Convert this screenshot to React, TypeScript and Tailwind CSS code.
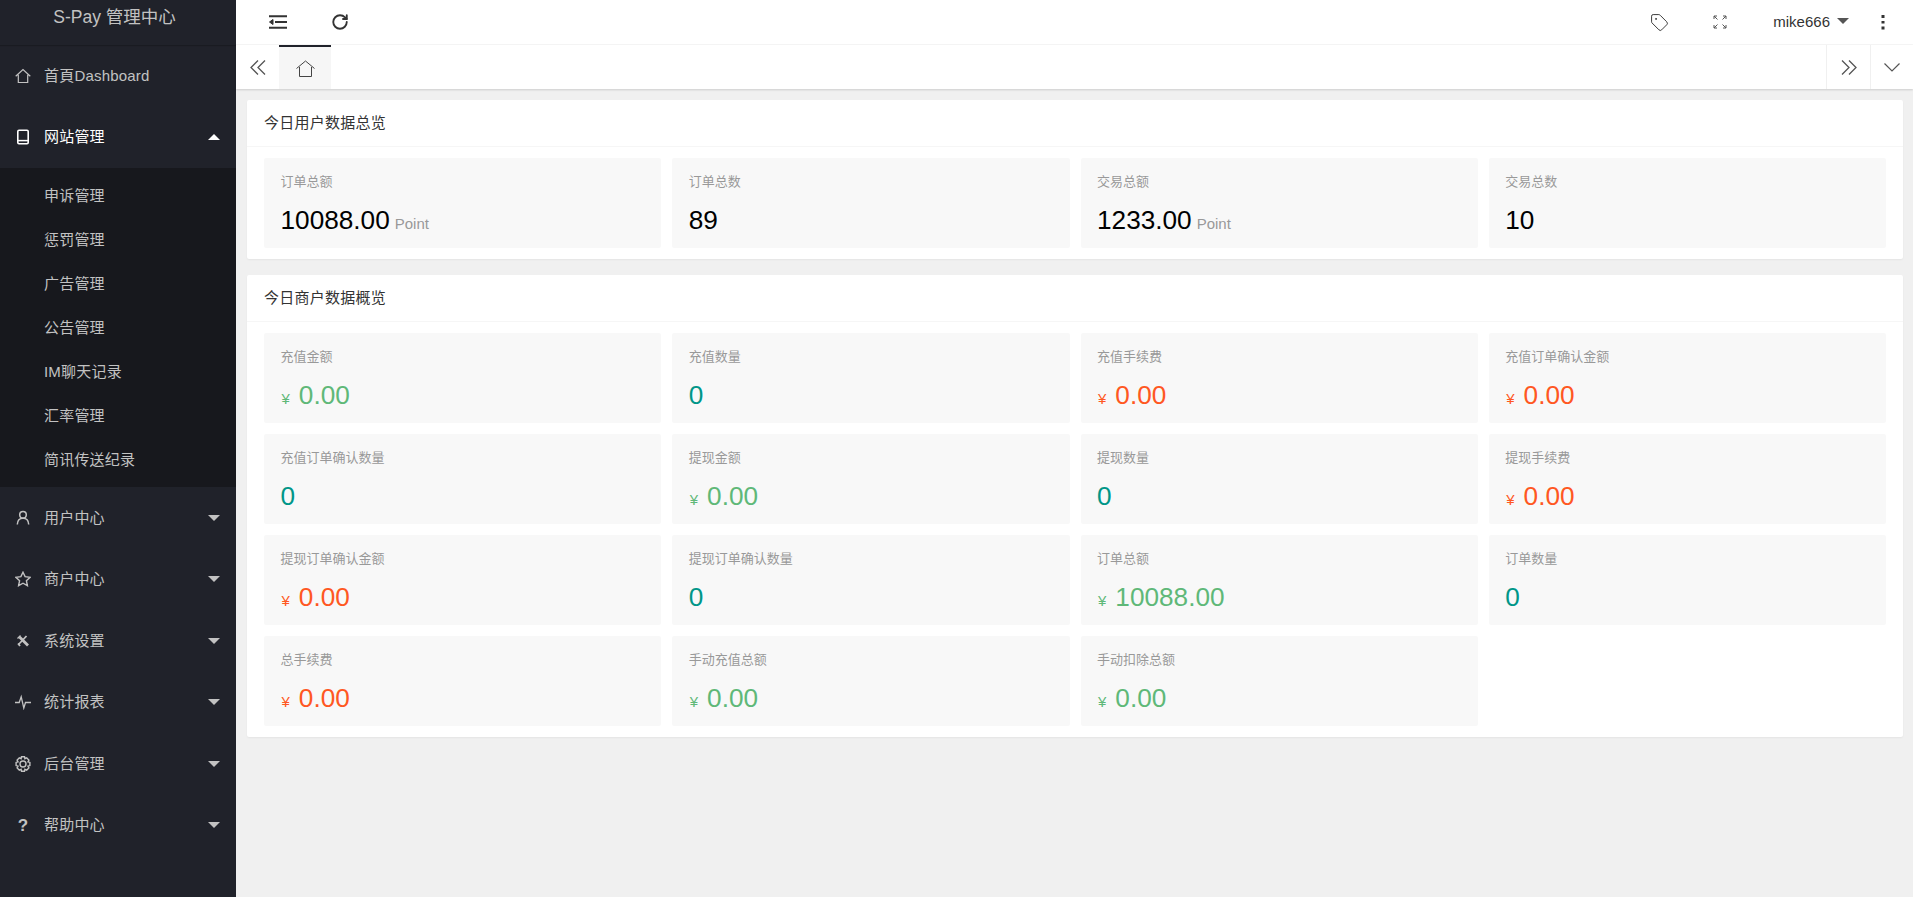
import React from "react";
import { RotateCw, Tag } from "lucide-react";

const FONT = "font-['Liberation_Sans','Noto_Sans_CJK_SC',sans-serif]";

const Svg = ({ children, className = "" }: { children: React.ReactNode; className?: string }) => (
  <svg viewBox="0 0 16 16" width="16" height="16" fill="none" stroke="currentColor" strokeWidth="1.2" className={className}>
    {children}
  </svg>
);

const HomeIco = () => (
  <Svg><path d="M.7 8.200 8 1.500l7.300 6.700M3.300 6.800v7.700h9.400V6.800" /></Svg>
);
const Phone = () => (
  <Svg><rect x="2.800" y="1.200" width="10.400" height="13.600" rx="1.200" strokeWidth="1.600" /><path d="M3 11.600h10" strokeWidth="1.500" /></Svg>
);
const User = () => (
  <Svg><circle cx="8" cy="4.800" r="3.300" strokeWidth="1.500" /><path d="M2.300 14.500c.2-4 2.200-6.200 5.700-6.200s5.500 2.200 5.700 6.200" strokeWidth="1.500" /></Svg>
);
const Star = () => (
  <Svg><path d="M8 1.200 10.100 5.600l5 .7-3.700 3.400 1 4.900L8 12.200l-4.400 2.400 1-4.900L.9 6.300l5-.7z" strokeWidth="1.400" /></Svg>
);
const Tools = () => (
  <svg viewBox="0 0 16 16" width="16" height="16" fill="none" stroke="currentColor">
    <path d="M4.500 4 13 12.500" strokeWidth="2.800" />
    <path d="M11.500 3 3.500 11.500" strokeWidth="1.800" />
    <path d="M2.500 5.500 5.500 2.500" strokeWidth="1.300" />
    <path d="M3 10.500 5 13" strokeWidth="1.800" />
  </svg>
);
const Pulse = () => (
  <Svg><path d="M0 8.500h4.200L6.200 2.800 8.800 14l1.700-5.500H16" strokeWidth="1.300" /></Svg>
);
const Gear = () => (
  <Svg>
    <circle cx="8" cy="8" r="3" strokeWidth="1.400" />
    <path d="M6.500.8h3l.4 1.900 1.800-.8 2.200 2.200-.9 1.700 1.900.6v3.200l-1.900.6.900 1.700-2.200 2.200-1.800-.8-.4 1.900h-3l-.4-1.900-1.800.8-2.200-2.200.9-1.700-1.900-.6V6.400l1.900-.6-.9-1.700 2.200-2.200 1.800.8z" strokeWidth="1.400" />
  </Svg>
);
const Question = () => (
  <span className="flex w-4 h-4 items-center justify-center text-[17px] font-bold leading-none">?</span>
);

const Caret = ({ up = false }: { up?: boolean }) => (
  <span
    className={
      (up ? "border-b-[6px] border-b-white " : "border-t-[6px] border-t-[#c2c2c2] ") +
      "w-0 h-0 border-x-[6px] border-x-transparent"
    }
  />
);

const MenuRow = ({ icon, label, open, active }: { icon: React.ReactNode; label: string; open?: boolean; active?: boolean }) => (
  <div className={"flex h-[61.5px] items-center pl-[15px] pr-[16px] " + (active ? "text-white" : "text-[#c2c2c2]")}>
    <span className="flex w-4 justify-center mr-[13px]">{icon}</span>
    <span className="flex-1 text-[15px] tracking-[0.2px]">{label}</span>
    {open !== undefined && <Caret up={open} />}
  </div>
);

const SubItems = ["申诉管理", "惩罚管理", "广告管理", "公告管理", "IM聊天记录", "汇率管理", "简讯传送纪录"];

const Sidebar = () => (
  <aside className="w-[236px] shrink-0 bg-[#20222a] flex flex-col min-h-[897px]">
    <div className="h-[45px] flex items-start justify-center pt-[5px] text-[17.5px] text-[#c2c2c2] pr-[7px] leading-[24px] shadow-[0_1px_1px_rgba(0,0,0,0.2)]">
      S-Pay 管理中心
    </div>
    <MenuRow icon={<HomeIco />} label="首頁Dashboard" />
    <MenuRow icon={<Phone />} label="网站管理" open active />
    <div className="bg-[#17181d] py-[5.5px] flex flex-col">
      {SubItems.map((s) => (
        <div key={s} className="h-[44px] flex items-center pl-[44px] pt-[1px] text-[15px] tracking-[0.2px] text-[#c2c2c2]">{s}</div>
      ))}
    </div>
    <MenuRow icon={<User />} label="用户中心" open={false} />
    <MenuRow icon={<Star />} label="商户中心" open={false} />
    <MenuRow icon={<Tools />} label="系统设置" open={false} />
    <MenuRow icon={<Pulse />} label="统计报表" open={false} />
    <MenuRow icon={<Gear />} label="后台管理" open={false} />
    <MenuRow icon={<Question />} label="帮助中心" open={false} />
  </aside>
);

const TopBar = () => (
  <header className="h-[45px] bg-white border-b border-[#f6f6f6] flex items-center text-[#333]">
    <div className="w-[51px] flex justify-end">
      <svg viewBox="0 0 18 14" width="18" height="14" fill="none" stroke="#333" strokeWidth="2">
        <path d="M0 1.200h18M6 7h12M0 12.800h18" />
        <path d="M4 4.500 .5 7 4 9.500z" fill="#333" strokeWidth="1" />
      </svg>
    </div>
    <RotateCw size={18} strokeWidth={2.5} className="ml-[44px] text-[#333]" />
    <div className="flex-1" />
    <Tag size={19} strokeWidth={1.2} className="text-[#333] mr-[44px]" />
    <svg viewBox="0 0 14 14" width="14" height="14" fill="none" stroke="#555" strokeWidth="1" className="mr-[46px]">
      <path d="M1 4V1h3M1 1l3.500 3.500M13 4V1h-3M13 1 9.500 4.500M1 10v3h3M1 13l3.500-3.500M13 10v3h-3M13 13 9.500 9.500" />
    </svg>
    <span className="text-[15px] text-[#333] mr-[7px]">mike666</span>
    <span className="w-0 h-0 border-x-[6px] border-x-transparent border-t-[6px] border-t-[#555] mb-[3px] mr-[32px]" />
    <svg viewBox="0 0 4 16" width="4" height="16" fill="#333" className="mr-[28px]">
      <rect x="0.500" y="1" width="3" height="3" />
      <rect x="0.500" y="7" width="3" height="2.500" />
      <rect x="0.500" y="12.500" width="3" height="3" />
    </svg>
  </header>
);

const Chevrons = ({ right = false }: { right?: boolean }) => (
  <svg viewBox="0 0 16 15" width="16" height="15" fill="none" stroke="#555" strokeWidth="1.300" className={right ? "rotate-180" : ""}>
    <path d="M8 .5 1 7.500l7 7M15 .5 8 7.500l7 7" />
  </svg>
);

const Tabs = () => (
  <div className="h-[44px] bg-white flex items-stretch shadow-[0_1px_2px_rgba(0,0,0,0.15)] relative">
    <div className="w-[43px] flex items-center justify-center">
      <Chevrons />
    </div>
    <div className="w-[52px] bg-[#f6f6f6] border-t-2 border-[#20222a] flex items-center justify-center">
      <svg viewBox="0 0 19 17" width="19" height="17" fill="none" stroke="#444" strokeWidth="1">
        <path d="M.5 8.500 9.500 1l9 7.500M3.500 7v9.500h12V7" />
      </svg>
    </div>
    <div className="flex-1" />
    <div className="w-[44px] border-l border-[#f0f0f0] flex items-center justify-center">
      <Chevrons right />
    </div>
    <div className="w-[43px] border-l border-[#f0f0f0] flex items-center justify-center">
      <svg viewBox="0 0 16 9" width="16" height="9" fill="none" stroke="#555" strokeWidth="1.200">
        <path d="M.5.500 8 8l7.500-7.500" />
      </svg>
    </div>
  </div>
);

type StatD = { label: string; value: string; unit?: string; color?: "black" | "green" | "teal" | "red" };

const colorMap = {
  black: "text-black",
  green: "text-[#5fb878]",
  teal: "text-[#009688]",
  red: "text-[#ff5722]",
};

const Stat = ({ label, value, unit, color = "black" }: StatD) => {
  const yen = color === "green" || color === "red";
  return (
    <div className="h-[90px] bg-[#f8f8f8] rounded-[2px] pl-[16.5px] pt-[15px]">
      <div className="text-[13px] leading-[18px] text-[#999]">{label}</div>
      <div className={"mt-[10.5px] flex items-baseline leading-[36px] text-[26.2px] " + colorMap[color]}>
        {yen && <span className="text-[15px] ml-[1px] mr-[9px]">¥</span>}
        <span>{value}</span>
        {unit && <span className="ml-[5px] text-[15px] text-[#999]">{unit}</span>}
      </div>
    </div>
  );
};

const Card = ({ title, items }: { title: string; items: StatD[] }) => (
  <section className="bg-white rounded-[2px] shadow-[0_1px_2px_rgba(0,0,0,0.05)]">
    <div className="h-[47px] flex items-center px-[17px] border-b border-[#f6f6f6] text-[15px] tracking-[0.25px] text-[#333]">{title}</div>
    <div className="grid grid-cols-4 gap-x-[11px] gap-y-[11px] px-[17px] py-[11px]">
      {items.map((it) => (
        <Stat key={it.label + it.value} {...it} />
      ))}
    </div>
  </section>
);

const user: StatD[] = [
  { label: "订单总额", value: "10088.00", unit: "Point" },
  { label: "订单总数", value: "89" },
  { label: "交易总额", value: "1233.00", unit: "Point" },
  { label: "交易总数", value: "10" },
];

const merchant: StatD[] = [
  { label: "充值金额", value: "0.00", color: "green" },
  { label: "充值数量", value: "0", color: "teal" },
  { label: "充值手续费", value: "0.00", color: "red" },
  { label: "充值订单确认金额", value: "0.00", color: "red" },
  { label: "充值订单确认数量", value: "0", color: "teal" },
  { label: "提现金额", value: "0.00", color: "green" },
  { label: "提现数量", value: "0", color: "teal" },
  { label: "提现手续费", value: "0.00", color: "red" },
  { label: "提现订单确认金额", value: "0.00", color: "red" },
  { label: "提现订单确认数量", value: "0", color: "teal" },
  { label: "订单总额", value: "10088.00", color: "green" },
  { label: "订单数量", value: "0", color: "teal" },
  { label: "总手续费", value: "0.00", color: "red" },
  { label: "手动充值总额", value: "0.00", color: "green" },
  { label: "手动扣除总额", value: "0.00", color: "green" },
];

export default function App() {
  return (
    <div className={"flex w-[1913px] h-[897px] overflow-hidden bg-[#f0f0f0] " + FONT}>
      <Sidebar />
      <main className="flex-1 flex flex-col">
        <TopBar />
        <Tabs />
        <div className="flex flex-col gap-[16px] pl-[11px] pr-[10px] pt-[11px]">
          <Card title="今日用户数据总览" items={user} />
          <Card title="今日商户数据概览" items={merchant} />
        </div>
      </main>
    </div>
  );
}
